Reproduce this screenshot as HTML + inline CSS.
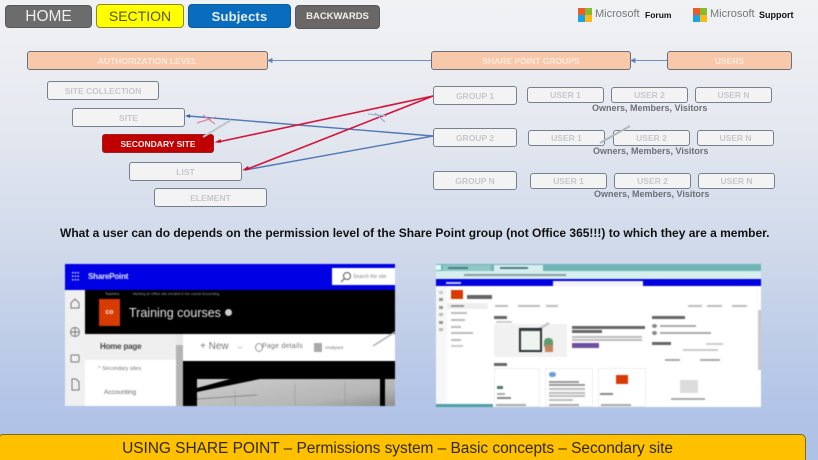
<!DOCTYPE html>
<html><head><meta charset="utf-8">
<style>
html,body{margin:0;padding:0;width:818px;height:460px;overflow:hidden}
#p{width:818px;height:460px;position:relative;overflow:hidden;background:linear-gradient(180deg,#f1f2f4 0%,#e6e9f0 25%,#cfd9ea 55%,#b2c4e7 88%,#aec1e6 100%);font-family:"Liberation Sans",sans-serif}
.a{position:absolute;box-sizing:border-box;display:flex;align-items:center;justify-content:center;white-space:nowrap}
.t{position:absolute;white-space:nowrap}
.nav{border-radius:4px;border:1px solid #55585c;height:24px}
.pe{background:#f8c8ab;border:1.5px solid #6b6f78;border-radius:3px;color:#fde9dc;font-weight:bold;font-size:8.5px;height:19px;top:51px}
.w{background:#f3f3f4;border:1.5px solid #76808f;border-radius:3px;color:#c6c8cb;font-weight:bold;font-size:8.5px}
.lv{height:19px;width:113px}
.g{height:19px;width:84px;left:433px}
.u{height:15.5px;width:77px}
.o{position:absolute;font-size:9px;font-weight:bold;color:#6d7076;white-space:nowrap}
.ms{position:absolute;width:14px;height:14px;display:grid;grid-template-columns:7px 7px;grid-template-rows:7px 7px}
svg{position:absolute;left:0;top:0}
.r{position:absolute;display:block}
</style></head><body><div id="p">

<div class="a nav" style="left:5px;top:5px;width:87px;height:23px;background:#6d6c6c;color:#eee;font-size:15.5px">HOME</div>
<div class="a nav" style="left:96px;top:4px;width:88px;background:#ffff00;color:#55560a;font-size:14px;border-color:#8b8a20">SECTION</div>
<div class="a nav" style="left:188px;top:4px;width:103px;background:#0a6cbd;color:#e6f0fa;font-size:13px;font-weight:bold;border-color:#0b5c9e;letter-spacing:.2px">Subjects</div>
<div class="a nav" style="left:295px;top:5px;width:85px;height:23.5px;background:#6b6766;color:#f0efee;font-size:9.5px;font-weight:bold">BACKWARDS</div>

<div class="ms" style="left:578px;top:8px"><i style="background:#f05a28"></i><i style="background:#84bb2f"></i><i style="background:#19a3e8"></i><i style="background:#fcb816"></i></div>
<div class="t" style="left:595px;top:8px;font-size:11px;color:#75787c">Microsoft</div>
<div class="t" style="left:645px;top:10px;font-size:8.5px;font-weight:bold;color:#111">Forum</div>
<div class="ms" style="left:693px;top:8px"><i style="background:#f05a28"></i><i style="background:#84bb2f"></i><i style="background:#19a3e8"></i><i style="background:#fcb816"></i></div>
<div class="t" style="left:710px;top:8px;font-size:11px;color:#75787c">Microsoft</div>
<div class="t" style="left:759px;top:10px;font-size:9px;font-weight:bold;color:#111">Support</div>

<div class="a pe" style="left:27px;width:241px">AUTHORIZATION LEVEL</div>
<div class="a pe" style="left:431px;width:200px">SHARE POINT GROUPS</div>
<div class="a pe" style="left:667px;width:125px">USERS</div>

<div class="a w lv" style="left:47px;top:81px;width:112px">SITE COLLECTION</div>
<div class="a w lv" style="left:72px;top:108px">SITE</div>
<div class="a lv" style="left:102px;top:134px;width:112px;background:#c00000;border:1px solid #a02020;border-radius:3px;color:#fbeeee;font-weight:bold;font-size:8.5px">SECONDARY SITE</div>
<div class="a w lv" style="left:129px;top:162px">LIST</div>
<div class="a w lv" style="left:154px;top:188px">ELEMENT</div>

<div class="a w g" style="top:86px">GROUP 1</div>
<div class="a w u" style="left:527px;top:87px">USER 1</div>
<div class="a w u" style="left:611px;top:87px">USER 2</div>
<div class="a w u" style="left:695px;top:87px">USER N</div>
<div class="o" style="left:592px;top:103px">Owners, Members, Visitors</div>

<div class="a w g" style="top:128px">GROUP 2</div>
<div class="a w u" style="left:528px;top:130px">USER 1</div>
<div class="a w u" style="left:613px;top:130px">USER 2</div>
<div class="a w u" style="left:697px;top:130px">USER N</div>
<div class="o" style="left:593px;top:146px">Owners, Members, Visitors</div>

<div class="a w g" style="top:171px">GROUP N</div>
<div class="a w u" style="left:530px;top:173px">USER 1</div>
<div class="a w u" style="left:614px;top:173px">USER 2</div>
<div class="a w u" style="left:698px;top:173px">USER N</div>
<div class="o" style="left:594px;top:189px">Owners, Members, Visitors</div>

<svg width="818" height="230" viewBox="0 0 818 230">
<g stroke="#6f8fbf" stroke-width="1" fill="#4a6fa8">
<line x1="431" y1="60.5" x2="270" y2="60.5"/><path d="M268 60.5l4-2v4z"/>
<line x1="667" y1="60.5" x2="633" y2="60.5"/><path d="M631 60.5l4-2v4z"/>
</g>
<g stroke="#4f78b5" stroke-width="1.4" fill="none">
<line x1="433" y1="136" x2="188" y2="116"/>
<line x1="433" y1="136" x2="245" y2="170"/>
</g>
<path d="M185 116l5-2v4z" fill="#3f68a8"/>
<g stroke="#d3163a" stroke-width="1.6" fill="none">
<line x1="433" y1="96" x2="218" y2="142"/>
<line x1="433" y1="96" x2="245" y2="170"/>
</g>
<path d="M214.500 142.500l6-3.500.8 3.800z" fill="#c8102e"/>
<path d="M242 170.500l6-4.500 1.500 3.600z" fill="#c8102e"/>
<g stroke="#d98aa0" stroke-width="1.2"><line x1="197" y1="123" x2="216" y2="117"/><line x1="203" y1="115" x2="215" y2="124"/></g>
<g stroke="#9db4cf" stroke-width="1.2"><line x1="368" y1="114" x2="387" y2="116"/><line x1="375" y1="113" x2="385" y2="122"/></g>
<line x1="203" y1="137" x2="231" y2="120" stroke="#c0c4cc" stroke-width="2"/>
<line x1="600" y1="143" x2="630" y2="126" stroke="#b4b8c0" stroke-width="2"/>
</svg>

<div class="t" style="left:60px;top:226px;font-size:12px;font-weight:bold;color:#111">What a user can do depends on the permission level of the Share Point group (not Office 365!!!) to which they are a member.</div>

<!-- screenshot 1 -->
<div style="position:absolute;left:65px;top:264px;width:330px;height:142px;background:#fff;overflow:hidden;filter:blur(.4px)">
 <b class="r" style="left:0;top:0;width:330px;height:26px;background:#0000e4"></b>
 <svg width="12" height="12" style="left:7px;top:8px"><g fill="#d5d7ff"><rect x="0" y="0" width="1.500" height="1.500"/><rect x="2.700" y="0" width="1.500" height="1.500"/><rect x="5.400" y="0" width="1.500" height="1.500"/><rect x="0" y="3.500" width="1.500" height="1.500"/><rect x="2.700" y="3.500" width="1.500" height="1.500"/><rect x="5.400" y="3.500" width="1.500" height="1.500"/><rect x="0" y="7" width="1.500" height="1.500"/><rect x="2.700" y="7" width="1.500" height="1.500"/><rect x="5.400" y="7" width="1.500" height="1.500"/></g></svg>
 <div class="t" style="left:23px;top:8px;font-size:8px;color:#e8e8ff;font-weight:bold;letter-spacing:-.2px">SharePoint</div>
 <b class="r" style="left:267px;top:4px;width:63px;height:17px;background:#fff"></b>
 <svg width="12" height="12" style="left:275px;top:7px"><circle cx="7" cy="5" r="3.500" fill="none" stroke="#555" stroke-width="1"/><line x1="4.500" y1="7.500" x2="1" y2="11" stroke="#555"/></svg>
 <div class="t" style="left:288px;top:10px;font-size:5px;color:#888">Search the site</div>
 <b class="r" style="left:0;top:26px;width:20px;height:116px;background:#f0f0f0"></b>
 <svg width="20" height="116" style="top:26px"><g fill="none" stroke="#777" stroke-width="1"><path d="M6 13l4-4 4 4v5H6z"/><circle cx="10" cy="42" r="4.500"/><path d="M5.500 42h9M10 37.500v9"/><rect x="6" y="65" width="8" height="7" rx="1"/><path d="M7 89h4l3 3v8H7z"/></g></svg>
 <b class="r" style="left:20px;top:26px;width:310px;height:44px;background:#000"></b>
 <div class="t" style="left:40px;top:28px;font-size:3.500px;color:#aaa">Teachers</div>
 <div class="t" style="left:68px;top:28px;font-size:3.500px;color:#999">Meeting an Office site enrolled in the course Accounting</div>
 <div class="a" style="left:34px;top:35px;width:21px;height:27px;background:#d83b01;color:#f5e4dc;font-size:7px;font-weight:bold">co</div>
 <div class="t" style="left:64px;top:42px;font-size:12.500px;color:#e6e6e6">Training courses</div>
 <b class="r" style="left:160px;top:45px;width:7px;height:7px;border-radius:50%;background:#ccc"></b>
 <b class="r" style="left:20px;top:70px;width:91px;height:26px;background:#efefef"></b>
 <div class="t" style="left:35px;top:78px;font-size:8px;font-weight:bold;color:#444;letter-spacing:-.2px">Home page</div>
 <div class="t" style="left:33px;top:102px;font-size:5.500px;color:#777">^ Secondary sites</div>
 <div class="t" style="left:39px;top:125px;font-size:6.500px;color:#666">Accounting</div>
 <b class="r" style="left:111px;top:70px;width:7px;height:72px;background:#e8e8e8"></b>
 <b class="r" style="left:111px;top:81px;width:7px;height:61px;background:#b4b4b4"></b>
 <div class="t" style="left:135px;top:77px;font-size:10px;color:#777">+ New</div>
 <b class="r" style="left:173px;top:83px;width:4px;height:1px;background:#bbb"></b>
 <b class="r" style="left:190px;top:79px;width:8px;height:9px;border:1px solid #999;border-radius:50%;box-sizing:border-box"></b>
 <div class="t" style="left:197px;top:79px;font-size:7px;color:#777;letter-spacing:.2px">Page details</div>
 <b class="r" style="left:249px;top:79px;width:8px;height:9px;background:#aaa"></b>
 <div class="t" style="left:260px;top:81px;font-size:4.500px;color:#777">Analyses</div>
 <b class="r" style="left:118px;top:97px;width:212px;height:45px;background:#000"></b>
 <b class="r" style="left:132px;top:115px;width:198px;height:27px;background:linear-gradient(170deg,#cdcdcd,#b5b5b5 70%,#8e8e8e)"></b>
 <svg width="330" height="142"><path d="M132 124L165 115 195 115 132 128z" fill="#000"/><rect x="315" y="115" width="5" height="27" fill="#000"/><path d="M170 126v16M230 120v22M280 118v24" stroke="#999" stroke-width=".6" fill="none"/><path d="M132 135l60-4" stroke="#888" fill="none"/><line x1="308" y1="82" x2="330" y2="68" stroke="#b0b0b0" stroke-width="1.500"/></svg>
</div>

<!-- screenshot 2 -->
<div style="position:absolute;left:436px;top:264px;width:325px;height:143px;background:#fff;overflow:hidden;filter:blur(.6px)">
 <b class="r" style="left:0;top:0;width:325px;height:7px;background:#6fb5b7"></b>
 <b class="r" style="left:0;top:1px;width:5px;height:5px;background:#dff"></b>
 <b class="r" style="left:7px;top:1px;width:48px;height:6px;background:#8ec7c8"></b>
 <b class="r" style="left:58px;top:1px;width:49px;height:6px;background:#d8eeee"></b>
 <b class="r" style="left:12px;top:3px;width:20px;height:2px;background:#4d7a80"></b>
 <b class="r" style="left:64px;top:3px;width:28px;height:2px;background:#4d7a80"></b>
 <b class="r" style="left:0;top:7px;width:325px;height:8px;background:#d6eeee"></b>
 <b class="r" style="left:28px;top:10px;width:102px;height:2px;background:#8a9ea4"></b>
 <b class="r" style="left:0;top:15px;width:325px;height:7px;background:#0000e0"></b>
 <b class="r" style="left:117px;top:17px;width:90px;height:5px;background:#f2f2fb"></b>
 <b class="r" style="left:10px;top:18px;width:15px;height:2px;background:#c8c8f8"></b>
 <b class="r" style="left:0;top:22px;width:11px;height:121px;background:#f7f7f7"></b>
 <b class="r" style="left:3px;top:27px;width:4px;height:3px;background:#ccc"></b>
 <b class="r" style="left:3px;top:34px;width:4px;height:3px;background:#999"></b>
 <b class="r" style="left:3px;top:42px;width:4px;height:3px;background:#999"></b>
 <b class="r" style="left:3px;top:49px;width:4px;height:3px;background:#bbb"></b>
 <b class="r" style="left:3px;top:57px;width:4px;height:3px;background:#999"></b>
 <b class="r" style="left:3px;top:64px;width:4px;height:3px;background:#bbb"></b>
 <b class="r" style="left:15px;top:26px;width:12px;height:9px;background:#d83b01"></b>
 <b class="r" style="left:31px;top:31px;width:25px;height:4px;background:#666"></b>
 <b class="r" style="left:11px;top:39px;width:41px;height:6px;background:#eee"></b>
 <b class="r" style="left:15px;top:41px;width:13px;height:2px;background:#999"></b>
 <b class="r" style="left:15px;top:48px;width:16px;height:2px;background:#bbb"></b>
 <b class="r" style="left:15px;top:55px;width:14px;height:2px;background:#bbb"></b>
 <b class="r" style="left:15px;top:62px;width:10px;height:2px;background:#bbb"></b>
 <b class="r" style="left:15px;top:68px;width:22px;height:2px;background:#bbb"></b>
 <b class="r" style="left:15px;top:75px;width:10px;height:2px;background:#bbb"></b>
 <b class="r" style="left:15px;top:81px;width:12px;height:2px;background:#ccc"></b>
 <b class="r" style="left:59px;top:41px;width:13px;height:2px;background:#bbb"></b>
 <b class="r" style="left:82px;top:41px;width:22px;height:2px;background:#bbb"></b>
 <b class="r" style="left:110px;top:41px;width:12px;height:2px;background:#bbb"></b>
 <b class="r" style="left:252px;top:41px;width:14px;height:2px;background:#bbb"></b>
 <b class="r" style="left:271px;top:41px;width:15px;height:2px;background:#bbb"></b>
 <b class="r" style="left:296px;top:41px;width:15px;height:2px;background:#bbb"></b>
 <b class="r" style="left:58px;top:52px;width:13px;height:3px;background:#666"></b>
 <b class="r" style="left:60px;top:57px;width:16px;height:2px;background:#ccc"></b>
 <b class="r" style="left:58px;top:60px;width:73px;height:33px;background:#f1f1f1"></b>
 <svg width="325" height="143"><line x1="92" y1="72" x2="113" y2="59" stroke="#c8c8c8" stroke-width="2.500"/></svg>
 <b class="r" style="left:83px;top:64px;width:23px;height:24px;background:#3c4048;border:1px solid #222;box-sizing:border-box"></b>
 <b class="r" style="left:85px;top:67px;width:19px;height:19px;background:#eef4ee"></b>
 <b class="r" style="left:108px;top:74px;width:9px;height:9px;background:#5e9a6e;border-radius:4px 4px 0 0"></b>
 <b class="r" style="left:109px;top:81px;width:8px;height:7px;background:#c4855b"></b>
 <b class="r" style="left:136px;top:62px;width:73px;height:3px;background:#666"></b>
 <b class="r" style="left:136px;top:66px;width:30px;height:3px;background:#666"></b>
 <b class="r" style="left:136px;top:72px;width:70px;height:1.500px;background:#bbb"></b>
 <b class="r" style="left:136px;top:75px;width:70px;height:1.500px;background:#bbb"></b>
 <b class="r" style="left:136px;top:79px;width:27px;height:5px;background:#6b4fa0"></b>
 <b class="r" style="left:216px;top:52px;width:33px;height:3px;background:#666"></b>
 <b class="r" style="left:216px;top:60px;width:5px;height:4px;background:#888;border-radius:50%"></b>
 <b class="r" style="left:224px;top:61px;width:36px;height:2px;background:#aaa"></b>
 <b class="r" style="left:216px;top:67px;width:5px;height:4px;background:#888;border-radius:50%"></b>
 <b class="r" style="left:224px;top:68px;width:51px;height:2px;background:#aaa"></b>
 <b class="r" style="left:216px;top:78px;width:19px;height:3px;background:#666"></b>
 <b class="r" style="left:270px;top:79px;width:17px;height:2px;background:#ccc"></b>
 <b class="r" style="left:247px;top:85px;width:35px;height:2px;background:#ccc"></b>
 <b class="r" style="left:229px;top:95px;width:15px;height:2px;background:#aaa"></b>
 <b class="r" style="left:264px;top:95px;width:20px;height:2px;background:#aaa"></b>
 <b class="r" style="left:58px;top:99px;width:13px;height:3px;background:#666"></b>
 <b class="r" style="left:58px;top:104px;width:46px;height:39px;border:1px solid #eee;box-sizing:border-box"></b>
 <b class="r" style="left:109px;top:104px;width:48px;height:39px;border:1px solid #eee;box-sizing:border-box"></b>
 <b class="r" style="left:162px;top:104px;width:48px;height:39px;border:1px solid #eee;box-sizing:border-box"></b>
 <b class="r" style="left:61px;top:122px;width:6px;height:3px;background:#4a7a6a"></b>
 <b class="r" style="left:61px;top:129px;width:8px;height:1.500px;background:#aaa"></b>
 <b class="r" style="left:61px;top:133px;width:14px;height:2px;background:#888"></b>
 <b class="r" style="left:113px;top:108px;width:7px;height:5px;background:#6f9fd6;border-radius:3px"></b>
 <b class="r" style="left:113px;top:117px;width:30px;height:1.500px;background:#999"></b>
 <b class="r" style="left:113px;top:120px;width:36px;height:1.500px;background:#999"></b>
 <b class="r" style="left:113px;top:124px;width:36px;height:1.500px;background:#bbb"></b>
 <b class="r" style="left:113px;top:128px;width:36px;height:1.500px;background:#bbb"></b>
 <b class="r" style="left:113px;top:131px;width:36px;height:1.500px;background:#bbb"></b>
 <b class="r" style="left:113px;top:135px;width:24px;height:1.500px;background:#bbb"></b>
 <b class="r" style="left:180px;top:111px;width:12px;height:9px;background:#d83b01"></b>
 <b class="r" style="left:164px;top:129px;width:13px;height:1.500px;background:#888"></b>
 <b class="r" style="left:60px;top:140px;width:30px;height:2px;background:#aaa"></b>
 <b class="r" style="left:113px;top:140px;width:30px;height:2px;background:#aaa"></b>
 <b class="r" style="left:165px;top:140px;width:30px;height:2px;background:#aaa"></b>
 <b class="r" style="left:244px;top:116px;width:18px;height:13px;background:#dcdcdc"></b>
 <b class="r" style="left:235px;top:134px;width:34px;height:2px;background:#aaa"></b>
 <b class="r" style="left:322px;top:46px;width:3px;height:60px;background:#c9c9c9"></b>
 <b class="r" style="left:0;top:140px;width:57px;height:3px;background:#4ca2a5"></b>
</div>

<div class="a" style="left:-2px;top:434px;width:808px;height:30px;background:#ffc000;border:1px solid #7f6a1f;border-radius:5px;align-items:flex-start;padding:5px 9px 0 0;color:#2e2a10;font-size:15.500px;letter-spacing:-.05px">USING SHARE POINT – Permissions system – Basic concepts – Secondary site</div>

</div></body></html>
